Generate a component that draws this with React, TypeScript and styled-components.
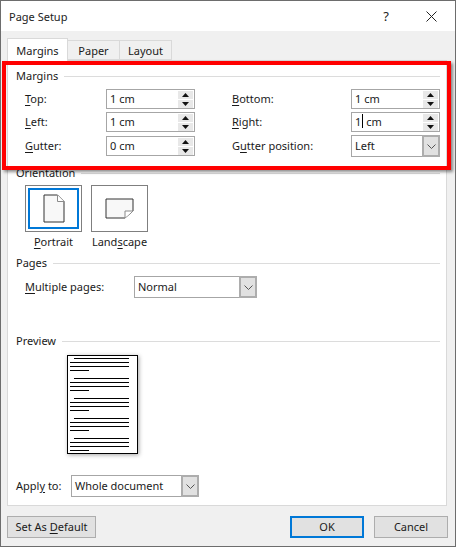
import React from 'react';
import styled, { createGlobalStyle } from 'styled-components';

const GlobalStyle = createGlobalStyle`
    html, body {
        margin: 0;
        padding: 0;
        background: #fff;
    }
    body {
        font-family: "Noto Sans", "Open Sans", sans-serif;
        font-size: 11px;
        color: #1a1a1a;
    }
    u {
        text-underline-offset: 2px;
    }
`;

function SpinField({ value, caret }: { value: string; caret?: boolean }) {
    return (
        <SpinBox>
            <SpinValue>
                {caret ? (
                    <>
                        1<Caret />
                        &nbsp;cm
                    </>
                ) : (
                    value
                )}
            </SpinValue>
            <SpinButtons>
                <SpinButton>
                    <svg width="7" height="4" viewBox="0 0 7 4">
                        <path d="M3.5 0L7 4H0z" fill="#111" />
                    </svg>
                </SpinButton>
                <SpinButton>
                    <svg width="7" height="4" viewBox="0 0 7 4">
                        <path d="M0 0H7L3.5 4z" fill="#111" />
                    </svg>
                </SpinButton>
            </SpinButtons>
        </SpinBox>
    );
}

function Combo({ value, width }: { value: string; width: number }) {
    return (
        <ComboBox $width={width}>
            <ComboValue>{value}</ComboValue>
            <ComboArrow>
                <svg width="9" height="5" viewBox="0 0 9 5">
                    <path d="M0.5 0.5L4.5 4.5L8.5 0.5" fill="none" stroke="#555" />
                </svg>
            </ComboArrow>
        </ComboBox>
    );
}

function SectionTitle({ children }: { children: React.ReactNode }) {
    return (
        <Heading>
            <span>{children}</span>
            <HeadingLine />
        </Heading>
    );
}

function PreviewPage() {
    const paragraphs = [0, 1, 2, 3, 4];
    return (
        <PreviewSvg width="72" height="99" viewBox="0 0 72 99">
            <rect x="0.5" y="0.5" width="70" height="98" fill="#fff" stroke="#000" />
            {paragraphs.map((p) => {
                const y = 3.5 + p * 20;
                return (
                    <g key={p} stroke="#000" strokeWidth="1">
                        <line x1="7" x2="62" y1={y} y2={y} />
                        <line x1="3" x2="62" y1={y + 4} y2={y + 4} />
                        <line x1="3" x2="62" y1={y + 8} y2={y + 8} />
                        <line x1="3" x2="22" y1={y + 12} y2={y + 12} />
                    </g>
                );
            })}
        </PreviewSvg>
    );
}

export default function App() {
    return (
        <>
            <GlobalStyle />
            <Window>
                <TitleBar>
                    <span>Page Setup</span>
                    <TitleActions>
                        <HelpMark>?</HelpMark>
                        <svg width="11" height="11" viewBox="0 0 11 11">
                            <path d="M0.5 0.5L10.5 10.5M10.5 0.5L0.5 10.5" stroke="#222" fill="none" />
                        </svg>
                    </TitleActions>
                </TitleBar>
                <Body>
                    <Tabs>
                        <Tab $active>Margins</Tab>
                        <Tab $w={52}>Paper</Tab>
                        <Tab $w={52}>Layout</Tab>
                    </Tabs>
                    <Panel>
                        <Section>
                            <SectionTitle>Margins</SectionTitle>
                            <MarginGrid>
                                <FieldLabel><u>T</u>op:</FieldLabel>
                                <SpinField value="1 cm" />
                                <FieldLabel $second><u>B</u>ottom:</FieldLabel>
                                <SpinField value="1 cm" />
                                <FieldLabel><u>L</u>eft:</FieldLabel>
                                <SpinField value="1 cm" />
                                <FieldLabel $second><u>R</u>ight:</FieldLabel>
                                <SpinField value="1 cm" caret />
                                <FieldLabel><u>G</u>utter:</FieldLabel>
                                <SpinField value="0 cm" />
                                <FieldLabel $second>G<u>u</u>tter position:</FieldLabel>
                                <Combo value="Left" width={89} />
                            </MarginGrid>
                        </Section>

                        <OrientationSection>
                            <SectionTitle>Orientation</SectionTitle>
                            <OrientationRow>
                                <OrientationItem>
                                    <OrientationButton $selected>
                                        <svg width="22" height="29" viewBox="0 0 22 29">
                                            <path d="M1 1H14.5L21 7.5V28H1z" fill="#f8f8f8" stroke="#333" />
                                            <path d="M14.5 1V7.5H21" fill="#fff" stroke="#8a8a8a" />
                                        </svg>
                                    </OrientationButton>
                                    <OrientationLabel><u>P</u>ortrait</OrientationLabel>
                                </OrientationItem>
                                <OrientationItem>
                                    <OrientationButton>
                                        <svg width="29" height="21" viewBox="0 0 29 21">
                                            <path d="M1 1H28V13L20 20H1z" fill="#f8f8f8" stroke="#333" />
                                            <path d="M28 13H20V20" fill="#fff" stroke="#8a8a8a" />
                                        </svg>
                                    </OrientationButton>
                                    <OrientationLabel>Land<u>s</u>cape</OrientationLabel>
                                </OrientationItem>
                            </OrientationRow>
                        </OrientationSection>

                        <PagesSection>
                            <SectionTitle>Pages</SectionTitle>
                            <PagesRow>
                                <PagesLabel><u>M</u>ultiple pages:</PagesLabel>
                                <Combo value="Normal" width={123} />
                            </PagesRow>
                        </PagesSection>

                        <PreviewSection>
                            <SectionTitle>Preview</SectionTitle>
                            <PreviewHolder>
                                <PreviewPage />
                            </PreviewHolder>
                            <ApplyRow>
                                <ApplyLabel>Appl<u>y</u> to:</ApplyLabel>
                                <Combo value="Whole document" width={128} />
                            </ApplyRow>
                        </PreviewSection>

                        <Highlight />
                    </Panel>
                    <Footer>
                        <FooterButton $w={89}>Set As <u>D</u>efault</FooterButton>
                        <FooterRight>
                            <FooterButton $w={74} $primary>OK</FooterButton>
                            <FooterButton $w={74}>Cancel</FooterButton>
                        </FooterRight>
                    </Footer>
                </Body>
            </Window>
        </>
    );
}

const Window = styled.div`
    box-sizing: border-box;
    width: 456px;
    height: 547px;
    display: flex;
    flex-direction: column;
    border: 1px solid #6d6d6d;
    background: #f0f0f0;
    overflow: hidden;
`;
const TitleBar = styled.div`
    height: 30px;
    flex: none;
    display: flex;
    align-items: center;
    justify-content: space-between;
    padding: 0 18px 0 8px;
    background: #fff;
    color: #222;
`;
const TitleActions = styled.div`
    display: flex;
    align-items: center;
    gap: 37px;
`;
const HelpMark = styled.span`
    font-size: 13px;
`;
const Body = styled.div`
    flex: 1;
    display: flex;
    flex-direction: column;
    padding: 7px 6px 0 6px;
`;
const Tabs = styled.div`
    display: flex;
    align-items: flex-end;
    height: 22px;
    position: relative;
    z-index: 1;
`;
const Tab = styled.div<{ $active?: boolean; $w?: number }>`
    box-sizing: border-box;
    width: ${(p) => p.$w ?? 61}px;
    height: ${(p) => (p.$active ? 23 : 20)}px;
    margin-bottom: ${(p) => (p.$active ? -1 : 0)}px;
    display: flex;
    align-items: center;
    justify-content: center;
    background: ${(p) => (p.$active ? '#fff' : '#f0f0f0')};
    border: 1px solid #d9d9d9;
    border-left-width: ${(p) => (p.$active ? 1 : 0)}px;
    border-bottom-width: ${(p) => (p.$active ? 0 : 1)}px;
`;
const Panel = styled.div`
    position: relative;
    box-sizing: border-box;
    width: 440px;
    height: 446px;
    background: #fff;
    border: 1px solid #d9d9d9;
    padding: 7px 6px 0 8px;
`;
const Section = styled.div`
    display: flex;
    flex-direction: column;
`;
const Heading = styled.div`
    display: flex;
    align-items: center;
    gap: 6px;
    height: 16px;
    line-height: 16px;
    > span {
        margin-top: -1px;
    }
`;
const HeadingLine = styled.div`
    flex: 1;
    height: 1px;
    background: #dcdcdc;
`;
const MarginGrid = styled.div`
    display: grid;
    grid-template-columns: 81px 89px 156px 89px;
    grid-template-rows: 20px 20px 22px;
    row-gap: 3px;
    align-items: center;
    margin: 5px 0 0 9px;
`;
const FieldLabel = styled.label<{ $second?: boolean }>`
    padding-left: ${(p) => (p.$second ? 37 : 0)}px;
    padding-bottom: 2px;
    white-space: nowrap;
`;
const SpinBox = styled.div`
    box-sizing: border-box;
    height: 20px;
    display: flex;
    justify-content: space-between;
    align-items: center;
    border: 1px solid #a6a6a6;
    background: #fff;
    padding: 0 1px 0 3px;
`;
const SpinValue = styled.div`
    display: flex;
    align-items: center;
    padding-bottom: 2px;
`;
const Caret = styled.span`
    display: inline-block;
    width: 1px;
    height: 14px;
    background: #000;
    margin-left: 1px;
`;
const SpinButtons = styled.div`
    display: flex;
    flex-direction: column;
    gap: 1px;
`;
const SpinButton = styled.div`
    width: 15px;
    height: 8px;
    display: flex;
    align-items: center;
    justify-content: center;
    background: #e8e8e8;
`;
const ComboBox = styled.div<{ $width: number }>`
    box-sizing: border-box;
    width: ${(p) => p.$width}px;
    height: 22px;
    display: flex;
    align-items: stretch;
    border: 1px solid #a6a6a6;
    background: #fff;
`;
const ComboValue = styled.div`
    flex: 1;
    display: flex;
    align-items: center;
    padding: 0 0 2px 3px;
`;
const ComboArrow = styled.div`
    box-sizing: border-box;
    width: 18px;
    display: flex;
    align-items: center;
    justify-content: center;
    background: #e1e1e1;
    border: 2px solid #adadad;
    margin: -1px -1px -1px 0;
`;
const OrientationSection = styled(Section)`
    margin-top: 8px;
`;
const OrientationRow = styled.div`
    display: flex;
    gap: 9px;
    margin: 4px 0 0 9px;
`;
const OrientationItem = styled.div`
    width: 57px;
    display: flex;
    flex-direction: column;
    align-items: center;
    gap: 2px;
`;
const OrientationButton = styled.div<{ $selected?: boolean }>`
    box-sizing: border-box;
    width: 57px;
    height: 47px;
    display: flex;
    align-items: center;
    justify-content: center;
    border: 1px solid #7f7f7f;
    background: #fff;
    outline: ${(p) => (p.$selected ? '2px solid #0078d7' : 'none')};
    outline-offset: -5px;
`;
const OrientationLabel = styled.div`
    height: 18px;
    line-height: 16px;
    white-space: nowrap;
`;
const PagesSection = styled(Section)`
    margin-top: 3px;
`;
const PagesRow = styled.div`
    display: flex;
    align-items: center;
    margin: 5px 0 0 9px;
`;
const PagesLabel = styled.label`
    width: 109px;
    padding-bottom: 2px;
`;
const PreviewSection = styled(Section)`
    margin-top: 35px;
`;
const PreviewHolder = styled.div`
    margin: 6px 0 0 51px;
`;
const PreviewSvg = styled.svg`
    display: block;
    filter: drop-shadow(1px 1px 2px rgba(0, 0, 0, 0.35));
`;
const ApplyRow = styled.div`
    display: flex;
    align-items: center;
    margin-top: 21px;
`;
const ApplyLabel = styled.label`
    width: 55px;
    padding-bottom: 2px;
`;
const Highlight = styled.div`
    position: absolute;
    left: -6px;
    top: 0;
    width: 449px;
    height: 109px;
    box-sizing: border-box;
    border: 4px solid #f00;
    box-shadow: 2px 2px 3px rgba(0, 0, 0, 0.45);
`;
const Footer = styled.div`
    display: flex;
    justify-content: space-between;
    margin-top: 10px;
    padding-right: 1px;
`;
const FooterRight = styled.div`
    display: flex;
    gap: 10px;
`;
const FooterButton = styled.div<{ $w: number; $primary?: boolean }>`
    box-sizing: border-box;
    width: ${(p) => p.$w}px;
    height: 22px;
    padding-bottom: 2px;
    display: flex;
    align-items: center;
    justify-content: center;
    white-space: pre;
    background: #e1e1e1;
    border: ${(p) => (p.$primary ? '2px solid #0078d7' : '1px solid #adadad')};
`;
